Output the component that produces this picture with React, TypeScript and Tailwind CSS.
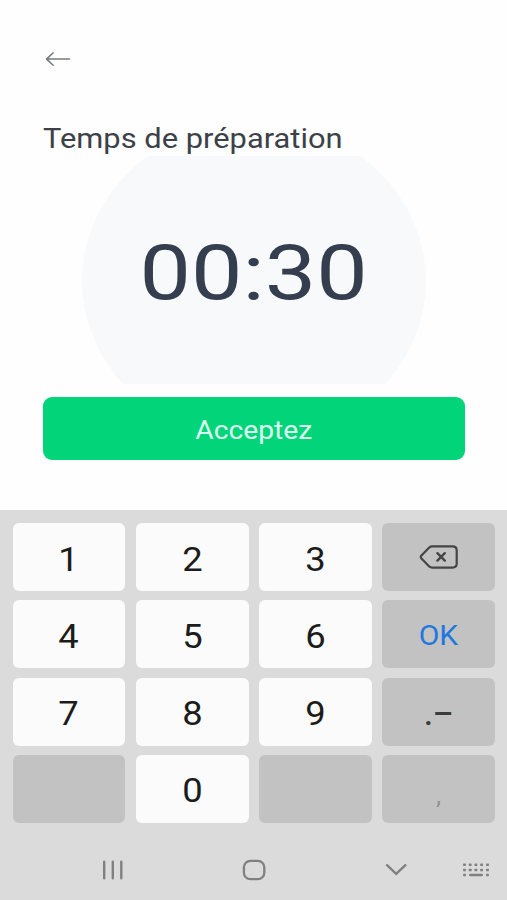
import { ReactNode, useState } from "react";
import clsx from "clsx";

type Key = {
  id: string;
  label?: ReactNode;
  dark?: boolean;
};

function BackIcon() {
  return (
    <svg width="28" height="18" viewBox="0 0 28 18" fill="none" stroke="#77797c" strokeWidth="1.5" strokeLinecap="round" strokeLinejoin="round">
      <path d="M25.5 9.1H2.5M9.2 2.8L2.5 9.1l6.7 6.2" />
    </svg>
  );
}

function DeleteIcon() {
  return (
    <svg className="ml-px" width="40" height="26" viewBox="0 0 40 26" fill="none" stroke="#454545" strokeWidth="2.2" strokeLinecap="round" strokeLinejoin="round">
      <path d="M13.2 2.4H33.5c2.7 0 4.2 1.5 4.2 4v13.2c0 2.5-1.5 4-4.2 4H13.2c-1.2 0-2.1-.4-3-1.2L2.5 14.6c-1-.9-1-2.3 0-3.2L10.2 3.6c.9-.8 1.8-1.2 3-1.2z" />
      <path d="M18.4 9.2l7.4 7.4M25.8 9.2l-7.4 7.4" strokeWidth="2.4" />
    </svg>
  );
}

function KeyboardIcon() {
  const columns = [1.5, 7.2, 12.9, 18.6, 24.5];
  return (
    <svg width="26" height="14" viewBox="0 0 26 14" fill="#808080">
      {columns.map((x) => (
        <g key={x}>
          <rect x={x - 1.4} y="0.5" width="2.8" height="2.6" rx="0.6" />
          <rect x={x - 1.4} y="5.7" width="2.8" height="2.6" rx="0.6" />
        </g>
      ))}
      <rect x="0.1" y="10.7" width="2.8" height="2.6" rx="0.6" />
      <rect x="6" y="10.7" width="14" height="2.6" rx="1.2" />
      <rect x="23.1" y="10.7" width="2.8" height="2.6" rx="0.6" />
    </svg>
  );
}

const keys: Key[] = [
  { id: "1", label: "1" },
  { id: "2", label: "2" },
  { id: "3", label: "3" },
  { id: "delete", label: <DeleteIcon />, dark: true },
  { id: "4", label: "4" },
  { id: "5", label: "5" },
  { id: "6", label: "6" },
  { id: "ok", label: <span className="inline-block scale-x-[1.07] pt-1 text-[28px] text-[#1f78e0]">OK</span>, dark: true },
  { id: "7", label: "7" },
  { id: "8", label: "8" },
  { id: "9", label: "9" },
  { id: "symbols", label: <span className="inline-block pt-1 font-medium text-[32px] text-[#3c3c3c]">.–</span>, dark: true },
  { id: "empty-left", dark: true },
  { id: "0", label: "0" },
  { id: "empty-right", dark: true },
  { id: "comma", label: <span className="inline-block pt-3 text-[26px] text-[#929292]">,</span>, dark: true },
];

function Keypad({ onPress }: { onPress: (id: string) => void }) {
  return (
    <div className="grid grid-cols-4 grid-rows-4 gap-x-[10.6px] gap-y-[9.3px] h-[300px] pl-[12.7px] pr-[12px]">
      {keys.map((key) => {
        const isDigit = /^\d$/.test(key.id);
        return (
          <button
            key={key.id}
            aria-label={key.id}
            onClick={() => onPress(key.id)}
            className={clsx(
              "flex items-center justify-center rounded-[6px] text-[34px] leading-none text-[#1c1c1c]",
              key.dark ? "bg-[#c2c2c2]" : "bg-[#fbfbfb]"
            )}
          >
            {isDigit ? <span className="inline-block scale-x-[1.07] pt-[3px]">{key.label}</span> : key.label}
          </button>
        );
      })}
    </div>
  );
}

export default function App() {
  const [digits, setDigits] = useState("0030");

  const handlePress = (id: string) => {
    if (id === "delete") {
      setDigits((prev) => "0" + prev.slice(0, 3));
    } else if (/^\d$/.test(id)) {
      setDigits((prev) => prev.slice(1) + id);
    }
  };

  return (
    <div className="flex flex-col w-[507px] h-[900px] overflow-hidden bg-[#fefefe] font-[Roboto,sans-serif]">
      <div className="h-[510px] px-[43px] flex flex-col">
        <button className="mt-[50px] ml-[1px] w-7" aria-label="Retour">
          <BackIcon />
        </button>

        <h1 className="mt-[54px] h-[34px] leading-[34px] text-[27px] text-[#3c4148] whitespace-nowrap">
          <span className="inline-block origin-left scale-x-[1.143]">Temps de préparation</span>
        </h1>

        <div className="h-[228px] flex justify-center overflow-hidden">
          <div className="-mt-[34px] w-[344px] h-[318px] shrink-0 rounded-[50%] bg-[#f7f9fb] flex items-center justify-center">
            <span className="inline-block scale-x-[1.205] text-[76px] leading-none text-[#343e4e] -mt-[17px]">
              {digits.slice(0, 2)}:{digits.slice(2)}
            </span>
          </div>
        </div>

        <button className="mt-[13px] h-[62.5px] w-[422px] rounded-[9px] bg-[#02d47a] text-[#dcfff0] text-[25px] flex items-center justify-center pt-1">
          <span className="inline-block scale-x-[1.13]">Acceptez</span>
        </button>
      </div>

      <div className="h-[390px] bg-[#dbdbdb] pt-[13px]">
        <Keypad onPress={handlePress} />

        <div className="flex items-center h-[77px] pt-4 pl-[102px] pr-[18px]">
          <svg width="22" height="20" viewBox="0 0 22 20" stroke="#808080" strokeWidth="2.4" strokeLinecap="round">
            <path d="M2.2 1.8v16.4M10.8 1.8v16.4M19.3 1.8v16.4" />
          </svg>
          <svg className="ml-[118px]" width="24" height="22" viewBox="0 0 24 22" fill="none" stroke="#808080" strokeWidth="2.3">
            <rect x="1.9" y="1.8" width="20.4" height="18.4" rx="6.5" />
          </svg>
          <svg className="ml-[119px]" width="22" height="14" viewBox="0 0 22 14" fill="none" stroke="#808080" strokeWidth="2.4" strokeLinecap="round">
            <path d="M2 2.2l9.2 8.6L20.4 2.2" />
          </svg>
          <div className="ml-auto">
            <KeyboardIcon />
          </div>
        </div>
      </div>
    </div>
  );
}
